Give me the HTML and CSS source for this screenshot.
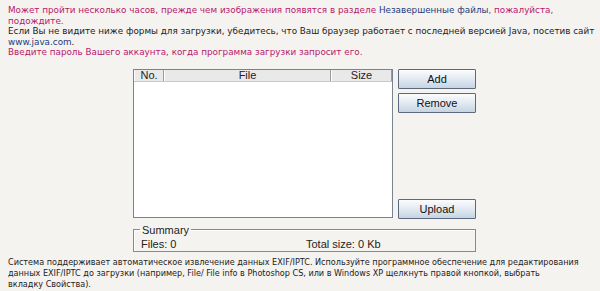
FILE: index.html
```html
<!DOCTYPE html>
<html lang="ru">
  <head>
    <meta charset="UTF-8" />
    <title>Загрузка файлов</title>
    <link rel="stylesheet" href="styles.css">
  </head>
  <body>
    <div class="notice">
      <p class="pink">Может пройти несколько часов, прежде чем изображения появятся в разделе <a href="#">Незавершенные файлы</a>, пожалуйста, подождите.</p>
      <p>Если Вы не видите ниже формы для загрузки, убедитесь, что Ваш браузер работает с последней версией Java, посетив сайт <a href="#">www.java.com</a>.</p>
      <p class="pink">Введите пароль Вашего аккаунта, когда программа загрузки запросит его.</p>
    </div>

    <div class="applet">
      <div class="uploader">
        <div class="files">
          <div class="files-head">
            <span class="col-no">No.</span>
            <span class="col-file">File</span>
            <span class="col-size">Size</span>
          </div>
        </div>
        <div class="actions">
          <button class="btn">Add</button>
          <button class="btn">Remove</button>
          <button class="btn upload">Upload</button>
        </div>
      </div>
      <fieldset class="summary">
        <legend>Summary</legend>
        <span class="sum-files">Files: 0</span>
        <span>Total size: 0 Kb</span>
      </fieldset>
    </div>

    <p class="footnote">Система поддерживает автоматическое извлечение данных EXIF/IPTC. Используйте программное обеспечение для редактирования данных EXIF/IPTC до загрузки (например, File/ File info в Photoshop CS, или в Windows XP щелкнуть правой кнопкой, выбрать вкладку&nbsp;Свойства).</p>
  </body>
</html>
```

FILE: styles.css
```css
body {
  margin: 0;
  padding: 5px 4px 0 8px;
  background-color: #f5f3ef;
  font-family: "DejaVu Sans", Verdana, sans-serif;
  font-size: 8.8px;
  line-height: 10.5px;
  color: #222;
}

p {
  margin: 0;
}

.pink {
  color: #b8176c;
}

a {
  color: #1d3b7c;
  text-decoration: none;
}

.applet {
  margin: 11px 0 0 125px;
  width: 343px;
  font-family: "Liberation Sans", Arial, sans-serif;
  font-size: 11px;
  line-height: 13px;
  color: #222;
}

.uploader {
  display: flex;
  gap: 5px;
}

.files {
  width: 258px;
  height: 147px;
  background: white;
  border: 1px solid #7a8490;
}

.files-head {
  display: flex;
  height: 11px;
  line-height: 11px;
  background: #e9e9e9;
  border-bottom: 1px solid #c9c9c9;
}

.files-head span {
  text-align: center;
  border-right: 1px solid #9a9a9a;
  border-left: 1px solid #fff;
}

.col-no {
  width: 28px;
}

.col-file {
  width: 165px;
}

.col-size {
  flex: 1;
}

.actions {
  display: flex;
  flex-direction: column;
  gap: 4px;
  width: 78px;
}

.btn {
  height: 20px;
  padding: 0;
  font-family: "Liberation Sans", Arial, sans-serif;
  font-size: 11px;
  color: #111;
  background: linear-gradient(#fbfcfd, #dde6ef 60%, #c5d4e3);
  border: 1px solid #5a6a7c;
  border-radius: 1px;
}

.upload {
  margin-top: auto;
  margin-bottom: -1px;
}

.summary {
  display: flex;
  margin: 7px 0 0 0;
  padding: 3px 7px 0 7px;
  border: 1px solid #8a8a8a;
  box-shadow: inset 1px 1px 0 #fff;
}

.summary legend {
  padding: 0 2px;
  margin-left: -1px;
  line-height: 10px;
}

.sum-files {
  width: 165px;
}

.footnote {
  margin-top: 5px;
  margin-right: -4px;
  font-size: 8.1px;
  line-height: 11px;
}
```
